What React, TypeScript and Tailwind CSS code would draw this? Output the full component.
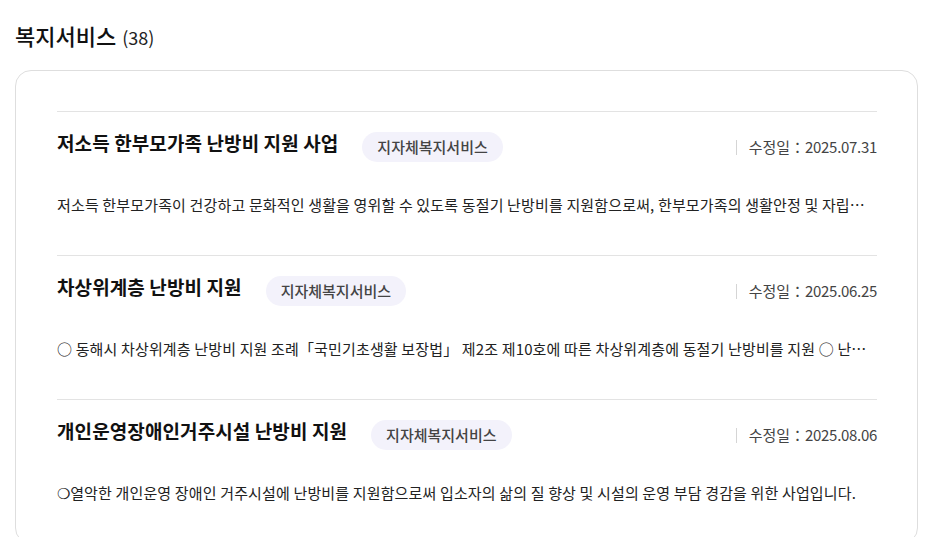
const items = [
  {
    title: '저소득 한부모가족 난방비 지원 사업',
    tag: '지자체복지서비스',
    date: '2025.07.31',
    desc: '저소득 한부모가족이 건강하고 문화적인 생활을 영위할 수 있도록 동절기 난방비를 지원함으로써, 한부모가족의 생활안정 및 자립기반 조성에 기여하고자 합니다.',
  },
  {
    title: '차상위계층 난방비 지원',
    tag: '지자체복지서비스',
    date: '2025.06.25',
    desc: '○ 동해시 차상위계층 난방비 지원 조례「국민기초생활 보장법」 제2조 제10호에 따른 차상위계층에 동절기 난방비를 지원 ○ 난방비 지원을 통한 생활안정',
  },
  {
    title: '개인운영장애인거주시설 난방비 지원',
    tag: '지자체복지서비스',
    date: '2025.08.06',
    desc: '❍열악한 개인운영 장애인 거주시설에 난방비를 지원함으로써 입소자의 삶의 질 향상 및 시설의 운영 부담 경감을 위한 사업입니다.',
  },
];

export default function App() {
  return (
    <div className="min-h-[537px] bg-white pl-[15px] pr-[7px] pt-[19px] font-['Noto_Sans_CJK_KR',sans-serif] text-[#111]">
      <h2 className="flex items-baseline leading-[32px]">
        <span className="text-[22px] font-medium text-[#111]">복지서비스</span>
        <span className="ml-[6px] text-[18px] font-normal text-[#222]">(38)</span>
      </h2>
      <div className="mt-[17px] rounded-[16px] border border-[#dedede] pl-[41px] pr-[40px] pt-[40px]">
        {items.map((it) => (
          <div key={it.title} className="border-t border-[#e3e3e3] pt-[18px] pb-[38px]">
            <div className="flex items-start">
              <h3 className="text-[19px] font-bold leading-[26px] tracking-[0.1px] text-[#111]">{it.title}</h3>
              <span className="ml-[24px] mt-[2px] rounded-full bg-[#f3f2fb] px-[15px] text-[15px] font-medium leading-[30px] text-[#444]">
                {it.tag}
              </span>
              <div className="ml-auto mt-[7px] flex items-center text-[15px] leading-[20px] text-[#444]">
                <span className="mr-[12px] h-[15px] w-px bg-[#d5d5d5]" />
                <span>수정일：</span>
                <span className="tracking-[-0.3px]">{it.date}</span>
              </div>
            </div>
            <p className="mt-[31px] truncate text-[15px] leading-[24px] tracking-[0.15px] text-[#222]">{it.desc}</p>
          </div>
        ))}
      </div>
    </div>
  );
}
